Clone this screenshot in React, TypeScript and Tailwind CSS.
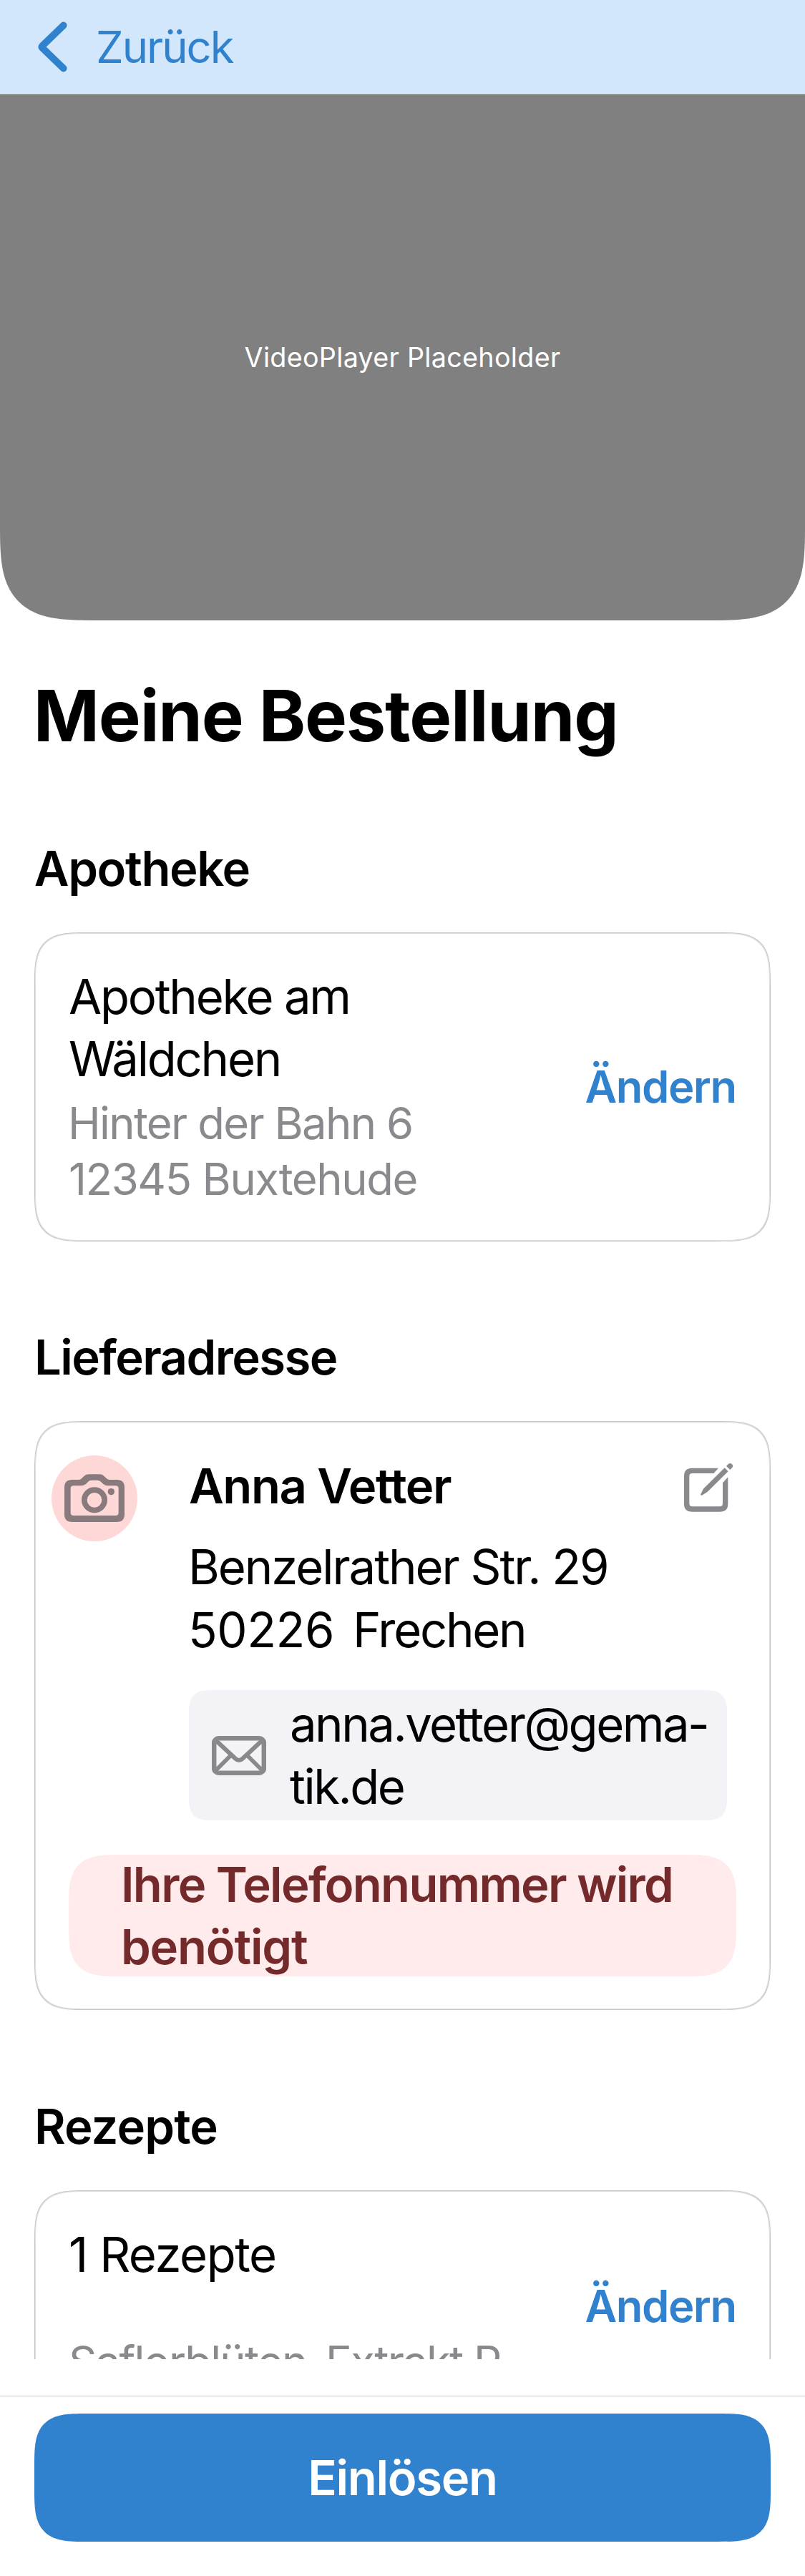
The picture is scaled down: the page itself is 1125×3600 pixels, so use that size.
import type { ReactNode } from "react";

function ChevronLeft() {
  return (
    <svg width="42" height="72" viewBox="0 0 42 72" fill="none" className="ml-[53px] shrink-0">
      <path
        d="M35.7 5.5 L6.2 34 Q4.8 35.5 6.2 37 L35.7 65.5"
        stroke="#3182ce"
        strokeWidth="9.8"
        strokeLinecap="round"
        strokeLinejoin="round"
      />
    </svg>
  );
}

function CameraBadge() {
  return (
    <svg width="120" height="120" viewBox="66 101 360 360" className="ml-[-25px] shrink-0">
      <circle cx="246" cy="281" r="180" fill="#fed7d7" />
      <path
        fill="#897a7d"
        fillRule="evenodd"
        d="M152 203H180Q187 203 192 198L203 187Q211 180 222 180H268Q279 180 286 187L297 198Q302 203 310 203H340Q372 203 372 235V348Q372 380 340 380H152Q120 380 120 348V235Q120 203 152 203ZM158 228Q146 228 146 240V341Q146 353 158 353H334Q347 353 347 341V240Q347 228 334 228H302Q291 228 283 221L271 210Q266 205 258 205H234Q227 205 222 209L210 221Q202 228 190 228Z"
      />
      <circle cx="246" cy="288" r="42.5" fill="none" stroke="#897a7d" strokeWidth="23" />
      <circle cx="316" cy="253" r="14" fill="#897a7d" />
    </svg>
  );
}

function EditIcon() {
  return (
    <svg width="70" height="69" viewBox="78 75 210 207" fill="#8a8a8e" className="mt-[11px] ml-auto mr-[50px] shrink-0">
      <path d="M222 98H112Q78 98 78 131V248Q78 281 112 281H228Q262 281 262 248V136L240 160V247Q240 259 228 259H112Q100 259 100 247V132Q100 120 112 120H202Z" />
      <path d="M148 207L158 187Q160 184 163 181L248 97L263 112L178 196Q175 199 171 201L153 212Q145 214 148 207Z" />
      <path d="M255 90L263 82Q271 74 279 82Q286 90 279 97L271 105Z" />
    </svg>
  );
}

function MailIcon() {
  return (
    <svg width="76" height="55" viewBox="48 78 228 165" fill="none" stroke="#89898d" className="ml-[32px] shrink-0">
      <rect x="57.5" y="88" width="209" height="145" rx="19" strokeWidth="19.5" />
      <path d="M64 96L148 174Q162 186 176 174L260 96" strokeWidth="18" />
      <path d="M129 158L62 225M195 158L262 225" strokeWidth="17" />
    </svg>
  );
}

function Card({ className, children }: { className: string; children: ReactNode }) {
  return (
    <div
      className={
        "mx-12 mt-[46px] rounded-[48px] border border-[#c6c6c8] shadow-[inset_0_0_0_1px_#dcdcde] supports-[corner-shape:squircle]:rounded-[73px] [corner-shape:superellipse(1.7)] " +
        className
      }
    >
      {children}
    </div>
  );
}

function SectionTitle({ className, children }: { className: string; children: ReactNode }) {
  return <h2 className={"text-[67px] leading-[87px] font-semibold whitespace-nowrap " + className}>{children}</h2>;
}

function ChangeButton() {
  return (
    <button className="mr-[47.5px] ml-auto w-[211px] shrink-0 pb-[1px] text-left text-[61.5px] leading-[78px] font-semibold tracking-[-0.0235em] whitespace-nowrap text-[#3182ce]">
      Ändern
    </button>
  );
}

export default function App() {
  return (
    <div className="flex h-[3600px] w-[1125px] flex-col overflow-hidden bg-white font-['Inter',sans-serif] text-black">
      <header className="flex h-[133px] shrink-0 items-center border-b border-[#5b625c] bg-[#d2e7fc]">
        <ChevronLeft />
        <span className="ml-[39px] text-[61.5px] leading-[78px] tracking-[-0.0325em] text-[#3182ce]">Zurück</span>
      </header>

      <main className="h-[3164px] shrink-0 overflow-hidden">
        <div className="flex h-[734px] items-center justify-center rounded-b-[90px] bg-[#808080] pb-[2px] supports-[corner-shape:squircle]:rounded-b-[132px] [corner-shape:superellipse(1.65)]">
          <span className="text-[37.7px] leading-[48px] tracking-[0.008em] text-white">VideoPlayer Placeholder</span>
        </div>

        <h1 className="mt-[73px] ml-[46.8px] text-[99px] leading-[120px] font-bold tracking-[-0.012em] whitespace-nowrap">
          Meine Bestellung
        </h1>

        <SectionTitle className="mt-[110px] ml-[47.8px] tracking-[-0.0205em]">Apotheke</SectionTitle>
        <Card className="flex h-[432px] items-center">
          <div className="mb-[2px] ml-[47px]">
            <p className="text-[67px] leading-[87px] tracking-[-0.0335em]">
              Apotheke am
              <br />
              Wäldchen
            </p>
            <p className="mt-[8px] text-[61.5px] leading-[78px] text-[#8a8a8e]">
              <span className="-ml-px block tracking-[-0.0269em]">Hinter der Bahn 6</span>
              <span className="block tracking-[-0.0227em]">12345 Buxtehude</span>
            </p>
          </div>
          <ChangeButton />
        </Card>

        <SectionTitle className="mt-[118px] ml-[48px] tracking-[-0.0235em]">Lieferadresse</SectionTitle>
        <Card className="h-[823px] pt-[46px]">
          <div className="flex items-start pl-12">
            <div className="pt-px">
              <CameraBadge />
            </div>
            <div className="ml-[71px] text-[67px] leading-[88px] whitespace-nowrap">
              <p className="ml-px font-semibold tracking-[-0.0205em]">Anna Vetter</p>
              <p className="mt-[25px] tracking-[-0.0308em]">Benzelrather Str. 29</p>
              <p className="flex">
                <span className="w-[230px] tracking-[-0.0064em]">50226</span>
                <span className="tracking-[-0.0341em]">Frechen</span>
              </p>
            </div>
            <EditIcon />
          </div>
          <div className="mt-[40px] ml-[215px] flex h-[182px] w-[752px] items-center rounded-[24px] bg-[#f2f2f7] supports-[corner-shape:squircle]:rounded-[36px] [corner-shape:superellipse(1.7)]">
            <MailIcon />
            <p className="ml-[33px] text-[67px] leading-[87px] tracking-[-0.0374em] whitespace-nowrap">
              anna.vetter@gema-
              <br />
              tik.de
            </p>
          </div>
          <div className="mx-[47px] mt-12 flex h-[170px] items-center rounded-[48px] bg-[#ffebeb] supports-[corner-shape:squircle]:rounded-[73px] [corner-shape:superellipse(1.7)]">
            <p className="ml-[73px] text-[67px] leading-[87px] font-semibold whitespace-nowrap text-[#742a2a]">
              <span className="block tracking-[-0.025em]">Ihre Telefonnummer wird</span>
              <span className="block tracking-[-0.0177em]">benötigt</span>
            </p>
          </div>
        </Card>

        <SectionTitle className="mt-[119px] ml-[48px] tracking-[-0.0127em]">Rezepte</SectionTitle>
        <Card className="flex h-[325px] items-center">
          <div className="ml-[47px] h-[233px] whitespace-nowrap">
            <p className="text-[67px] leading-[87px] tracking-[-0.0218em]">1 Rezepte</p>
            <p className="mt-[68px] text-[61.5px] leading-[78px] tracking-[-0.0281em] text-[#8a8a8e]">
              Saflorblüten-Extrakt P
            </p>
          </div>
          <ChangeButton />
        </Card>
      </main>

      <footer className="mt-[51px] border-t border-[#c6c6c8] px-12 pt-[24px]">
        <button className="flex h-[179px] w-full items-center justify-center rounded-[48px] bg-[#3182ce] text-[67px] leading-[87px] font-semibold tracking-[-0.0189em] text-white supports-[corner-shape:squircle]:rounded-[73px] [corner-shape:superellipse(1.7)]">
          Einlösen
        </button>
      </footer>
    </div>
  );
}
